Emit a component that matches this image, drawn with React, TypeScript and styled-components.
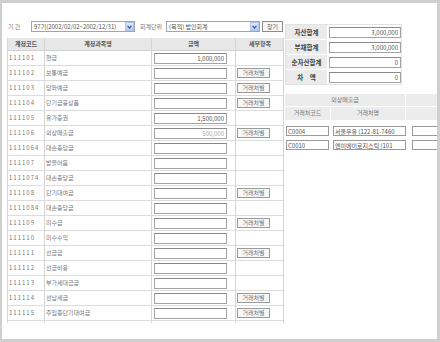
import styled, { createGlobalStyle } from "styled-components";

const GlobalStyle = createGlobalStyle`
  html, body {
    margin: 0;
    padding: 0;
    background: #fff;
  }
  body {
    font-family: "Noto Sans CJK KR", "Noto Sans", sans-serif;
  }
`;

type Row = {
  code: string;
  name: string;
  amount?: string;
  muted?: boolean;
  detail?: boolean;
};

const rows: Row[] = [
  { code: "111101", name: "현금", amount: "1,000,000" },
  { code: "111102", name: "보통예금", detail: true },
  { code: "111103", name: "당좌예금", detail: true },
  { code: "111104", name: "단기금융상품", detail: true },
  { code: "111105", name: "유가증권", amount: "1,500,000" },
  { code: "111106", name: "외상매출금", amount: "500,000", muted: true, detail: true },
  { code: "1111064", name: "대손충당금" },
  { code: "111107", name: "받을어음" },
  { code: "1111074", name: "대손충당금" },
  { code: "111108", name: "단기대여금", detail: true },
  { code: "1111084", name: "대손충당금" },
  { code: "111109", name: "미수금", detail: true },
  { code: "111110", name: "미수수익" },
  { code: "111111", name: "선급금", detail: true },
  { code: "111112", name: "선급비용" },
  { code: "111113", name: "부가세대급금" },
  { code: "111114", name: "선납세금", detail: true },
  { code: "111115", name: "주임종단기대여금", detail: true },
  // next row is scrolled out of view, only its borders peek out
  { code: "", name: "" },
];

const summary = [
  { label: "자산합계", value: "3,000,000" },
  { label: "부채합계", value: "3,000,000" },
  { label: "순자산합계", value: "0" },
  { label: "차　액", value: "0" },
];

const partners = [
  { code: "C0004", name: "서울우유 (122-81-7460" },
  { code: "C0010", name: "엔이에이로지스틱 (101" },
];

const Arrow = () => (
  <SelectArrow>
    <svg width="5" height="4" viewBox="0 0 5 4">
      <path d="M0.5 0.8 L2.5 3 L4.5 0.8" fill="none" stroke="#3d5a8c" strokeWidth="1.2" />
    </svg>
  </SelectArrow>
);

const App = () => {
  return (
    <>
      <GlobalStyle />
      <Frame>
        <LeftColumn>
          <FilterRow>
            <FilterLabel>기 간</FilterLabel>
            <SelectBox $width={104}>
              <span>97기(2002/02/02~2002/12/31)</span>
              <Arrow />
            </SelectBox>
            <FilterLabel $gap={4}>회계단위</FilterLabel>
            <SelectBox $width={94}>
              <span>(목적) 법인회계</span>
              <Arrow />
            </SelectBox>
            <SearchButton>찾기</SearchButton>
          </FilterRow>

          <AccountTable>
            <HeadRow>
              <HeadCell>계정코드</HeadCell>
              <HeadCell>계정과목명</HeadCell>
              <HeadCell>금액</HeadCell>
              <HeadCell>세부항목</HeadCell>
            </HeadRow>
            {rows.map((r, i) => (
              <BodyRow key={i}>
                <CodeCell>{r.code}</CodeCell>
                <NameCell>{r.name}</NameCell>
                <FieldCell>
                  <AmountInput readOnly value={r.amount ?? ""} $muted={r.muted} />
                </FieldCell>
                <FieldCell>{r.detail && <SmallButton>거래처별</SmallButton>}</FieldCell>
              </BodyRow>
            ))}
          </AccountTable>
        </LeftColumn>

        <RightColumn>
          <SummaryTable>
            {summary.map((s) => (
              <SummaryRow key={s.label}>
                <SummaryLabel>{s.label}</SummaryLabel>
                <SummaryValue>
                  <AmountInput readOnly value={s.value} $width={72} />
                </SummaryValue>
              </SummaryRow>
            ))}
          </SummaryTable>

          <PartnerTable>
            <PartnerHead $height={12}>
              <PartnerHeadCell $span={2}>외상매출금</PartnerHeadCell>
              <PartnerHeadCell />
            </PartnerHead>
            <PartnerHead $height={13}>
              <PartnerHeadCell>거래처코드</PartnerHeadCell>
              <PartnerHeadCell>거래처명</PartnerHeadCell>
              <PartnerHeadCell />
            </PartnerHead>
            <PartnerBody>
              {partners.map((p) => (
                <PartnerRow key={p.code}>
                  <TextInput readOnly value={p.code} $width={43} />
                  <TextInput readOnly value={p.name} $width={73} />
                  <TextInput readOnly value="" $width={60} />
                </PartnerRow>
              ))}
            </PartnerBody>
          </PartnerTable>
        </RightColumn>
      </Frame>
    </>
  );
};

export default App;

const Frame = styled.div`
  box-sizing: border-box;
  width: 440px;
  height: 342px;
  border-style: solid;
  border-color: #cfcfcf;
  border-width: 3px 3px 3px 2px;
  background: #fff;
  padding-left: 5px;
  display: flex;
  gap: 1px;
  overflow: hidden;
`;

const LeftColumn = styled.div`
  width: 277px;
  flex: none;
  padding-top: 18px;
`;

const FilterRow = styled.div`
  display: flex;
  align-items: center;
  height: 11px;
  margin-bottom: 6px;
`;

const FilterLabel = styled.span<{ $gap?: number }>`
  font-size: 6px;
  color: #777;
  width: ${(p) => (p.$gap ? "auto" : "23px")};
  padding-left: 1px;
  margin: 0 ${(p) => p.$gap ?? 0}px 0 ${(p) => p.$gap ?? 0}px;
  white-space: pre;
`;

const SelectBox = styled.div<{ $width: number }>`
  box-sizing: border-box;
  width: ${(p) => p.$width}px;
  height: 11px;
  border: 1px solid #9aa6b8;
  display: flex;
  align-items: center;
  justify-content: space-between;
  padding: 0 0 0 2px;
  font-size: 6px;
  color: #555;
  white-space: nowrap;
  overflow: hidden;
`;

const SelectArrow = styled.span`
  box-sizing: border-box;
  width: 9px;
  height: 9px;
  flex: none;
  background: linear-gradient(#dce7fd, #b7cbf6);
  border: 1px solid #b3c4ea;
  display: flex;
  align-items: center;
  justify-content: center;
`;

const SearchButton = styled.button`
  box-sizing: border-box;
  margin-left: 2px;
  width: 21px;
  height: 11px;
  padding: 0;
  border: 1px solid #8c8c8c;
  background: #f6f6f6;
  font-family: inherit;
  font-size: 6px;
  color: #666;
  line-height: 9px;
`;

const AccountTable = styled.div`
  height: 285px;
  overflow: hidden;
  border-left: 1px solid #d4d4d4;
  border-right: 1px solid #d4d4d4;
`;

const gridCols = "37px 107px 84px 48px";

const HeadRow = styled.div`
  display: grid;
  grid-template-columns: ${gridCols};
  height: 13px;
  box-sizing: border-box;
  background: #e7e7e7;
  border-bottom: 1px solid #d0d0d0;
`;

const HeadCell = styled.div`
  border-right: 1px solid #d4d4d4;
  font-size: 6px;
  font-weight: 700;
  color: #555;
  text-align: center;
  line-height: 12px;
  &:last-child {
    border-right: none;
  }
`;

const BodyRow = styled.div`
  display: grid;
  grid-template-columns: ${gridCols};
  height: 15px;
  box-sizing: border-box;
  border-bottom: 1px solid #dcdcdc;
`;

const CodeCell = styled.div`
  border-right: 1px solid #d4d4d4;
  padding-left: 1px;
  font-size: 6px;
  letter-spacing: 1px;
  color: #777;
  line-height: 14px;
  white-space: nowrap;
`;

const NameCell = styled.div`
  border-right: 1px solid #d4d4d4;
  padding-left: 1px;
  font-size: 6px;
  color: #777;
  line-height: 14px;
  white-space: nowrap;
`;

const FieldCell = styled.div`
  border-right: 1px solid #d4d4d4;
  display: flex;
  align-items: center;
  padding-left: 2px;
  &:last-child {
    border-right: none;
    padding-left: 1px;
  }
`;

const AmountInput = styled.input<{ $muted?: boolean; $width?: number }>`
  box-sizing: border-box;
  width: ${(p) => p.$width ?? 73}px;
  height: 11px;
  margin: 0;
  padding: 0 2px;
  border: 1px solid #a3a3a3;
  border-top-color: #8a8a8a;
  background: #fff;
  font-family: inherit;
  font-size: 6px;
  text-align: right;
  color: ${(p) => (p.$muted ? "#aaa" : "#555")};
  outline: none;
`;

const SmallButton = styled.button`
  box-sizing: border-box;
  width: 33px;
  height: 10px;
  padding: 0;
  border: 1px solid #999;
  background: #f7f7f7;
  font-family: inherit;
  font-size: 6px;
  color: #777;
  line-height: 8px;
  white-space: nowrap;
`;

const RightColumn = styled.div`
  flex: none;
  width: 200px;
  padding-top: 21px;
`;

const SummaryTable = styled.div`
  width: 117px;
  box-sizing: border-box;
  border: 1px solid #e2e2e2;
`;

const SummaryRow = styled.div`
  display: grid;
  grid-template-columns: 41px 1fr;
  height: 15px;
  border-bottom: 1px solid #fff;
  box-sizing: border-box;
  &:last-child {
    border-bottom: none;
    height: 14px;
  }
`;

const SummaryLabel = styled.div`
  background: #ebebeb;
  font-size: 6.5px;
  font-weight: 700;
  color: #444;
  text-align: center;
  line-height: 14px;
  white-space: pre;
`;

const SummaryValue = styled.div`
  display: flex;
  align-items: center;
  padding-left: 2px;
  background: #fff;
`;

const PartnerTable = styled.div`
  margin-top: 9px;
  width: 200px;
`;

const partnerCols = "46px 75px 1fr";

const PartnerHead = styled.div<{ $height: number }>`
  display: grid;
  grid-template-columns: ${partnerCols};
  height: ${(p) => p.$height}px;
  border-bottom: 1px solid #fff;
`;

const PartnerHeadCell = styled.div<{ $span?: number }>`
  grid-column: span ${(p) => p.$span ?? 1};
  background: #ececec;
  border-right: 1px solid #fff;
  font-size: 6px;
  color: #777;
  text-align: center;
  line-height: 12px;
  white-space: nowrap;
`;

const PartnerBody = styled.div`
  padding-top: 3px;
`;

const PartnerRow = styled.div`
  display: flex;
  align-items: center;
  gap: 4px;
  height: 14px;
  padding-left: 1px;
  & > input:last-child {
    margin-left: 2px;
  }
`;

const TextInput = styled.input<{ $width: number }>`
  box-sizing: border-box;
  width: ${(p) => p.$width}px;
  flex: none;
  height: 10px;
  margin: 0;
  padding: 0 1px;
  border: 1px solid #9a9a9a;
  background: #fff;
  font-family: inherit;
  font-size: 6px;
  color: #555;
  outline: none;
`;
